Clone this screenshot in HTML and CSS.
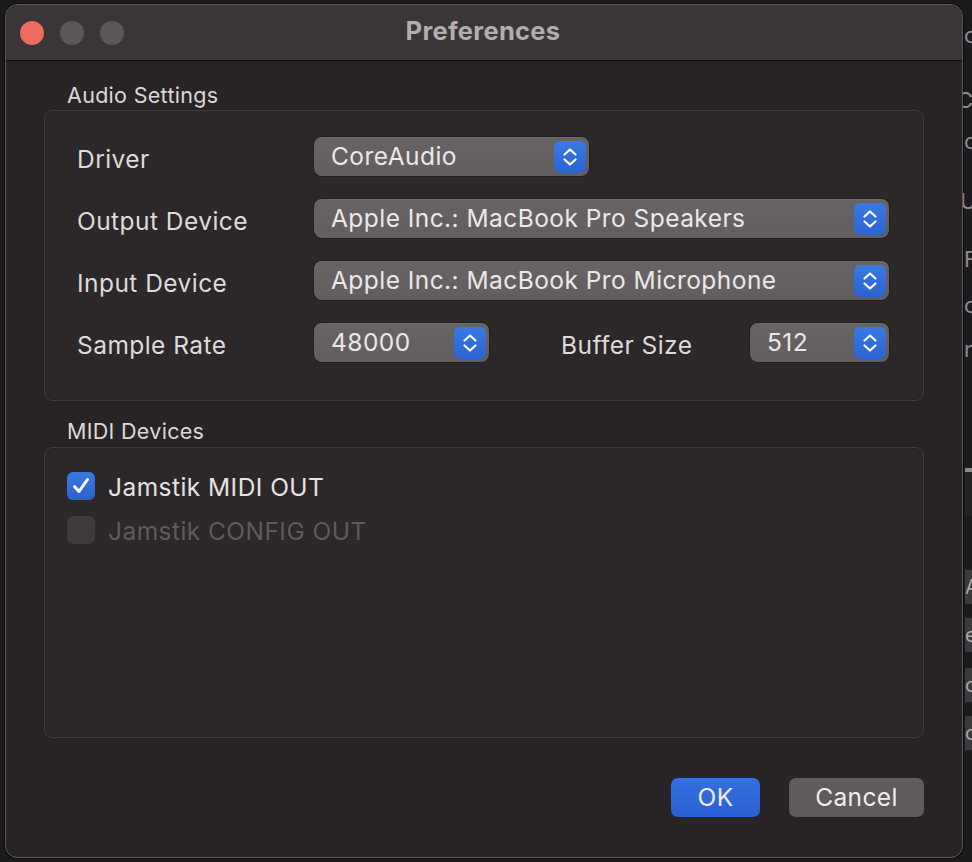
FILE: index.html
```html
<!DOCTYPE html>
<html>
<head>
<meta charset="utf-8">
<link rel="stylesheet" href="styles.css">
</head>
<body>
<div class="desktop">
  <div class="window">
    <div class="titlebar">
      <div class="lights">
        <span class="light red"></span>
        <span class="light gray"></span>
        <span class="light gray"></span>
      </div>
      <div class="title">Preferences</div>
    </div>
    <div class="content">
      <div class="section-title">Audio Settings</div>
      <div class="group audio">
        <div class="row">
          <div class="label">Driver</div>
          <div class="popup w-driver"><span class="val">CoreAudio</span><span class="stepper"><svg viewBox="0 0 32 32" width="32" height="32"><path d="M10.5 13.5 L16 8.5 L21.5 13.5 M10.5 18.5 L16 23.5 L21.5 18.5" fill="none" stroke="#fff" stroke-width="2.2" stroke-linecap="round" stroke-linejoin="round"/></svg></span></div>
        </div>
        <div class="row">
          <div class="label">Output Device</div>
          <div class="popup w-full"><span class="val">Apple Inc.: MacBook Pro Speakers</span><span class="stepper"><svg viewBox="0 0 32 32" width="32" height="32"><path d="M10.5 13.5 L16 8.5 L21.5 13.5 M10.5 18.5 L16 23.5 L21.5 18.5" fill="none" stroke="#fff" stroke-width="2.2" stroke-linecap="round" stroke-linejoin="round"/></svg></span></div>
        </div>
        <div class="row">
          <div class="label">Input Device</div>
          <div class="popup w-full"><span class="val">Apple Inc.: MacBook Pro Microphone</span><span class="stepper"><svg viewBox="0 0 32 32" width="32" height="32"><path d="M10.5 13.5 L16 8.5 L21.5 13.5 M10.5 18.5 L16 23.5 L21.5 18.5" fill="none" stroke="#fff" stroke-width="2.2" stroke-linecap="round" stroke-linejoin="round"/></svg></span></div>
        </div>
        <div class="row">
          <div class="label">Sample Rate</div>
          <div class="popup w-rate"><span class="val">48000</span><span class="stepper"><svg viewBox="0 0 32 32" width="32" height="32"><path d="M10.5 13.5 L16 8.5 L21.5 13.5 M10.5 18.5 L16 23.5 L21.5 18.5" fill="none" stroke="#fff" stroke-width="2.2" stroke-linecap="round" stroke-linejoin="round"/></svg></span></div>
          <div class="label buffer-label">Buffer Size</div>
          <div class="popup w-buf"><span class="val">512</span><span class="stepper"><svg viewBox="0 0 32 32" width="32" height="32"><path d="M10.5 13.5 L16 8.5 L21.5 13.5 M10.5 18.5 L16 23.5 L21.5 18.5" fill="none" stroke="#fff" stroke-width="2.2" stroke-linecap="round" stroke-linejoin="round"/></svg></span></div>
        </div>
      </div>
      <div class="section-title midi-title">MIDI Devices</div>
      <div class="group midi">
        <div class="check-row">
          <span class="checkbox on"><svg viewBox="0 0 28 28" width="28" height="28"><path d="M7.5 14.5 L12 19.5 L20.5 7.5" fill="none" stroke="#fff" stroke-width="3" stroke-linecap="round" stroke-linejoin="round"/></svg></span>
          <span class="check-label">Jamstik MIDI OUT</span>
        </div>
        <div class="check-row disabled">
          <span class="checkbox off"></span>
          <span class="check-label">Jamstik CONFIG OUT</span>
        </div>
      </div>
      <div class="buttons">
        <button class="btn ok">OK</button>
        <button class="btn cancel">Cancel</button>
      </div>
    </div>
  </div>
  <div class="behind">
    <div class="frag f1">o</div>
    <div class="frag f2">Co</div>
    <div class="frag f3">o</div>
    <div class="frag f4">U</div>
    <div class="frag f5">F</div>
    <div class="frag f6">o</div>
    <div class="frag f7">n</div>
    <div class="bar"></div>
    <div class="chip c1">A</div>
    <div class="chip c2">e</div>
    <div class="chip c3">o</div>
    <div class="chip c4">o</div>
  </div>
</div>
</body>
</html>
```

FILE: styles.css
```css
* { box-sizing: border-box; }
html, body {
  margin: 0;
  padding: 0;
  background: #1b1b1d;
  width: 972px;
  height: 862px;
  overflow: hidden;
}
body {
  font-family: "Inter", "Noto Sans", sans-serif;
  -webkit-font-smoothing: antialiased;
}
.desktop {
  display: flex;
  padding: 4px 0 0 5px;
  height: 862px;
}
.window {
  width: 958px;
  height: 854px;
  flex: none;
  border: 1px solid #5e5a5b;
  border-radius: 12px;
  box-shadow: 0 0 0 1px #0a0a0a;
  background: #282325;
  overflow: hidden;
  display: flex;
  flex-direction: column;
}
.titlebar {
  height: 56px;
  flex: none;
  background: #3a3637;
  border-bottom: 1px solid #0f0d0e;
  display: flex;
  align-items: center;
  position: relative;
}
.lights {
  display: flex;
  gap: 16px;
  padding-left: 14px;
}
.light {
  width: 24px;
  height: 24px;
  border-radius: 50%;
  display: block;
}
.light.red { background: #ec6a5f; }
.light.gray { background: #5b5758; }
.title {
  position: absolute;
  left: 0;
  right: 0;
  top: 0;
  bottom: 0;
  display: flex;
  align-items: center;
  justify-content: center;
  font-weight: 700;
  font-size: 25.5px;
  letter-spacing: 0.3px;
  color: #b2adae;
  padding-bottom: 4px;
  padding-right: 2px;
  pointer-events: none;
}
.content {
  flex: 1;
  padding: 0 39px 0 38px;
  display: flex;
  flex-direction: column;
}
.section-title {
  font-size: 21.5px;
  letter-spacing: 0.3px;
  color: #dcd8d9;
  padding-left: 23px;
  height: 49px;
  line-height: 22px;
  padding-top: 23px;
}
.midi-title {
  height: 46px;
  padding-top: 19px;
}
.group {
  border: 1px solid #403b3d;
  border-radius: 8px;
  background: #2c2729;
  width: 880px;
}
.audio {
  height: 291px;
  padding: 26px 33px 0 32px;
  display: flex;
  flex-direction: column;
  gap: 23px;
}
.row {
  display: flex;
  align-items: center;
  height: 39px;
}
.label {
  width: 237px;
  flex: none;
  font-size: 24.5px;
  letter-spacing: 0.45px;
  color: #dedadb;
  padding-top: 5px;
}
.buffer-label {
  width: 189px;
  margin-left: 72px;
}
.popup {
  height: 39px;
  flex: none;
  border-radius: 8px;
  background: linear-gradient(#686465, #625e5f);
  box-shadow: 0 0 0 1px rgba(0,0,0,0.25), inset 0 1px 0 rgba(255,255,255,0.06);
  display: flex;
  align-items: center;
  justify-content: space-between;
  padding: 0 3px 0 17px;
}
.val {
  font-size: 24.5px;
  letter-spacing: 0.45px;
  color: #ebe8e8;
  white-space: nowrap;
  padding-bottom: 1px;
}
.w-driver { width: 275px; }
.w-full { width: 575px; }
.w-rate { width: 175px; }
.w-buf { width: 139px; }
.stepper {
  width: 32px;
  height: 32px;
  border-radius: 6px;
  background: linear-gradient(#3a7ae6, #2c64cf);
  display: block;
  flex: none;
}
.stepper svg { display: block; }
.midi {
  height: 291px;
  padding: 24px 0 0 22px;
  display: flex;
  flex-direction: column;
  gap: 17px;
}
.check-row {
  display: flex;
  align-items: center;
  gap: 13px;
  height: 27px;
}
.checkbox {
  width: 28px;
  height: 28px;
  border-radius: 6px;
  display: block;
  flex: none;
}
.checkbox svg { display: block; }
.checkbox.on { background: linear-gradient(#3a79e4, #2a62cd); }
.checkbox.off { background: #3e3a3b; }
.check-label {
  font-size: 24.5px;
  letter-spacing: 0.45px;
  color: #e6e2e3;
  padding-top: 2px;
}
.disabled .check-label { color: #5f5a5b; }
.buttons {
  display: flex;
  justify-content: flex-end;
  gap: 29px;
  width: 880px;
  padding-top: 40px;
}
.btn {
  height: 39px;
  border: none;
  border-radius: 7px;
  font-family: inherit;
  font-size: 24.5px;
  letter-spacing: 0.4px;
  color: #efecec;
  padding: 0 0 2px 0;
}
.ok {
  width: 89px;
  background: linear-gradient(#3370e0, #2a60d2);
}
.cancel {
  width: 135px;
  background: #5f5a5b;
}
.behind {
  flex: 1;
  position: relative;
  overflow: hidden;
}
.frag {
  position: absolute;
  left: 1px;
  font-size: 22px;
  color: #8d8a8c;
  line-height: 1;
}
.f1 { top: 20px; }
.f2 { top: 85px; left: -6px; }
.f3 { top: 126px; }
.f4 { top: 186px; left: -3px; }
.f5 { top: 244px; }
.f6 { top: 290px; }
.f7 { top: 334px; }
.bar {
  position: absolute;
  left: 2px;
  right: 0;
  top: 464px;
  height: 48px;
  background: #232325;
  border-top: 4px solid #8a8a8c;
}
.chip {
  position: absolute;
  left: 2px;
  width: 20px;
  height: 34px;
  background: #3a3a3c;
  color: #a9a7a8;
  font-size: 20px;
  line-height: 34px;
}
.c1 { top: 566px; }
.c2 { top: 614px; }
.c3 { top: 664px; }
.c4 { top: 712px; }
```
